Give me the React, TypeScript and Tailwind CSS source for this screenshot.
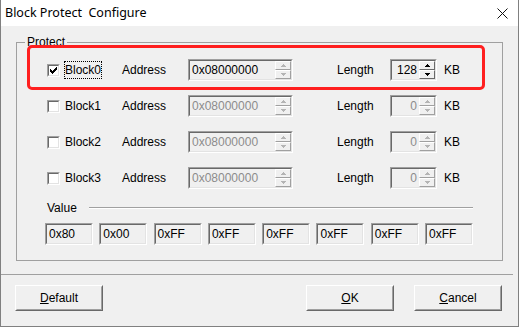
import React from 'react';

const sans = "font-['Liberation_Sans',Arial,sans-serif]";

function Sunken({ className = '', inner = '', children }: { className?: string; inner?: string; children?: React.ReactNode }) {
  return (
    <div className={`shrink-0 border border-t-[#a0a0a0] border-l-[#a0a0a0] border-r-white border-b-white ${className}`}>
      <div className={`h-full border border-t-[#696969] border-l-[#696969] border-r-[#e3e3e3] border-b-[#e3e3e3] ${inner}`}>
        {children}
      </div>
    </div>
  );
}

function SpinBtn({ up, on }: { up?: boolean; on?: boolean }) {
  const c = on ? '#000' : '#b4b4b4';
  return (
    <div className={`flex h-[9px] w-[16px] items-center justify-center border border-t-white border-l-white bg-[#f0f0f0] ${on ? 'border-r-[#696969] border-b-[#696969]' : 'border-r-[#a0a0a0] border-b-[#a0a0a0]'}`}>
      <svg width="5" height="3" viewBox="0 0 5 3" shapeRendering="crispEdges">
        {up ? (
          <>
            <rect x="2" y="0" width="1" height="1" fill={c} />
            <rect x="1" y="1" width="3" height="1" fill={c} />
            <rect x="0" y="2" width="5" height="1" fill={c} />
          </>
        ) : (
          <>
            <rect x="0" y="0" width="5" height="1" fill={c} />
            <rect x="1" y="1" width="3" height="1" fill={c} />
            <rect x="2" y="2" width="1" height="1" fill={c} />
          </>
        )}
      </svg>
    </div>
  );
}

function Edit({ w, text, dim, spin, spinOn, right }: { w: string; text: string; dim?: boolean; spin?: boolean; spinOn?: boolean; right?: boolean }) {
  return (
    <Sunken className={`${w} h-[22px]`} inner="flex items-center bg-[#f0f0f0]">
      <span className={`flex-1 leading-[14px] ${right ? 'pr-[2px] text-right' : 'pl-[2px]'} ${dim ? 'text-[#8c8c8c]' : 'text-black'}`}>{text}</span>
      {spin && (
        <div className="flex flex-col">
          <SpinBtn up on={spinOn} />
          <SpinBtn on={spinOn} />
        </div>
      )}
    </Sunken>
  );
}

function Check({ on }: { on?: boolean }) {
  const px = [
    [6, 0], [5, 1], [6, 1], [0, 2], [4, 2], [5, 2], [6, 2],
    [0, 3], [1, 3], [3, 3], [4, 3], [5, 3], [0, 4], [1, 4], [2, 4], [3, 4], [4, 4],
    [1, 5], [2, 5], [3, 5], [2, 6],
  ];
  return (
    <Sunken className="h-[13px] w-[13px]" inner="flex items-center justify-center bg-white">
      {on && (
        <svg width="7" height="7" viewBox="0 0 7 7" shapeRendering="crispEdges">
          {px.map(([x, y]) => <rect key={`${x}-${y}`} x={x} y={y} width="1" height="1" fill="#000" />)}
        </svg>
      )}
    </Sunken>
  );
}

function BlockRow({ i, on }: { i: number; on?: boolean }) {
  return (
    <div className="flex h-[22px] items-center">
      <Check on={on} />
      <div className="ml-[4px] w-[58px]">
        <span className={`inline-block border leading-[16px] ${on ? 'border-dotted border-black' : 'border-transparent'}`}>Block{i}</span>
      </div>
      <span className="w-[66px]">Address</span>
      <Edit w="w-[105px]" text="0x08000000" dim={!on} spin />
      <span className="ml-[44px] w-[53px]">Length</span>
      <Edit w="w-[47px]" text={on ? '128' : '0'} dim={!on} spin spinOn={on} right />
      <span className="ml-[7px]">KB</span>
    </div>
  );
}

function Btn({ u, rest }: { u: string; rest: string }) {
  return (
    <div className="h-[26px] w-[88px] border border-t-white border-l-white border-r-[#696969] border-b-[#696969]">
      <div className="flex h-full items-center justify-center border border-t-[#f0f0f0] border-l-[#f0f0f0] border-r-[#a0a0a0] border-b-[#a0a0a0]">
        <span><span className="underline">{u}</span>{rest}</span>
      </div>
    </div>
  );
}

export default function App() {
  const values = ['0x80', '0x00', '0xFF', '0xFF', '0xFF', '0xFF', '0xFF', '0xFF'];
  return (
    <div className={`relative h-[327px] w-[519px] overflow-hidden border-x border-b border-[#808080] bg-[#f0f0f0] text-[12px] text-black ${sans}`}>
      {/* title bar */}
      <div className="flex h-[26px] items-center justify-between bg-white pl-[4px] pr-[10px]">
        <span className="whitespace-pre font-['Noto_Sans',sans-serif] text-[12.5px]">Block Protect  Configure</span>
        <svg width="11" height="11" viewBox="0 0 11 11">
          <path d="M0.5 0.5L10.5 10.5M10.5 0.5L0.5 10.5" stroke="#111" strokeWidth="1" />
        </svg>
      </div>

      <fieldset className="ml-[15px] mt-[9px] w-[485px] border border-[#a0a0a0]">
        <legend className="ml-[8px] px-[2px] leading-[14px]">Protect</legend>
        <div className="pl-[30px] pr-[29px] pt-[10px] pb-[15px]">
          <div className="flex flex-col gap-[14px]">
            <BlockRow i={0} on />
            <BlockRow i={1} />
            <BlockRow i={2} />
            <BlockRow i={3} />
          </div>

          <div className="mt-[12px] flex items-center">
            <span className="leading-[14px]">Value</span>
            <div className="ml-[12px] h-[2px] flex-1 border-t border-b border-t-[#a0a0a0] border-b-white" />
          </div>

          <div className="-ml-[2px] mt-[8px] flex gap-[6.3px]">
            {values.map((v, k) => (
              <Edit key={k} w="w-[48px]" text={v} />
            ))}
          </div>
        </div>
      </fieldset>

      <div className="mt-[13px] mr-[5px] h-px bg-[#a0a0a0]" />

      <div className="mt-[10px] flex items-center pl-[14px] pr-[16px]">
        <Btn u="D" rest="efault" />
        <div className="ml-auto flex gap-[20px]">
          <Btn u="O" rest="K" />
          <Btn u="C" rest="ancel" />
        </div>
      </div>

      {/* annotation */}
      <div className="absolute left-[26px] top-[45px] h-[45px] w-[458px] rounded-[5px] border-[3px] border-[#ff1f1f]" />
    </div>
  );
}
